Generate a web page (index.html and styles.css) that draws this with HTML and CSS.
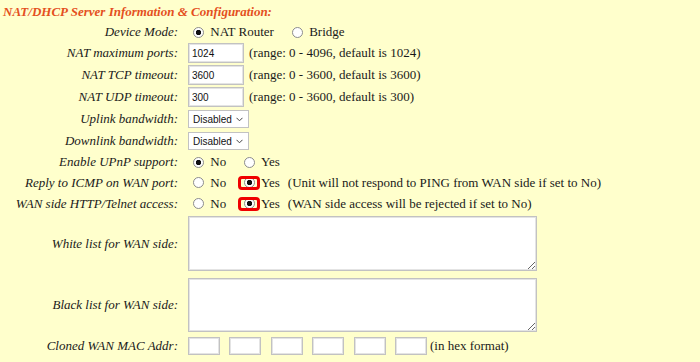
FILE: index.html
```html
<!DOCTYPE html>
<html lang="en">
  <head>
    <meta charset="UTF-8" />
    <meta name="viewport" content="width=device-width, initial-scale=1.0" />
    <title>NAT/DHCP Server Configuration</title>
    <link rel="stylesheet" href="styles.css">
  </head>
  <body>
    <div class="config">
      <div class="heading">NAT/DHCP Server Information &amp; Configuration:</div>

      <!-- Mode -->
      <div class="row row-sm">
        <div class="label">Device Mode:</div>
        <div class="field">
          <label class="opt"><input type="radio" name="mode" checked> NAT Router</label>
          <label class="opt"><input type="radio" name="mode"> Bridge</label>
        </div>
      </div>

      <!-- NAT settings -->
      <div class="row">
        <div class="label">NAT maximum ports:</div>
        <div class="field">
          <input type="text" class="num" value="1024">
          <span class="hint">(range: 0 - 4096, default is 1024)</span>
        </div>
      </div>
      <div class="row">
        <div class="label">NAT TCP timeout:</div>
        <div class="field">
          <input type="text" class="num" value="3600">
          <span class="hint">(range: 0 - 3600, default is 3600)</span>
        </div>
      </div>
      <div class="row">
        <div class="label">NAT UDP timeout:</div>
        <div class="field">
          <input type="text" class="num" value="300">
          <span class="hint">(range: 0 - 3600, default is 300)</span>
        </div>
      </div>

      <!-- Bandwidth -->
      <div class="row">
        <div class="label">Uplink bandwidth:</div>
        <div class="field">
          <span class="select-wrap">
            <select><option>Disabled</option></select>
            <svg class="chevron" width="7" height="5" viewBox="0 0 7 5"><polyline points="0.5,0.8 3.5,3.8 6.5,0.8" fill="none" stroke="#444" stroke-width="1"/></svg>
          </span>
        </div>
      </div>
      <div class="row">
        <div class="label">Downlink bandwidth:</div>
        <div class="field">
          <span class="select-wrap">
            <select><option>Disabled</option></select>
            <svg class="chevron" width="7" height="5" viewBox="0 0 7 5"><polyline points="0.5,0.8 3.5,3.8 6.5,0.8" fill="none" stroke="#444" stroke-width="1"/></svg>
          </span>
        </div>
      </div>

      <!-- Yes / No options -->
      <div class="row row-sm">
        <div class="label">Enable UPnP support:</div>
        <div class="field">
          <label class="opt"><input type="radio" name="upnp" checked> No</label>
          <label class="opt"><input type="radio" name="upnp"> Yes</label>
        </div>
      </div>
      <div class="row row-md">
        <div class="label">Reply to ICMP on WAN port:</div>
        <div class="field">
          <label class="opt"><input type="radio" name="icmp"> No</label>
          <label class="opt"><span class="mark"><input type="radio" name="icmp" checked></span> Yes</label>
          <span class="note">(Unit will not respond to PING from WAN side if set to No)</span>
        </div>
      </div>
      <div class="row row-md">
        <div class="label">WAN side HTTP/Telnet access:</div>
        <div class="field">
          <label class="opt"><input type="radio" name="wan"> No</label>
          <label class="opt"><span class="mark"><input type="radio" name="wan" checked></span> Yes</label>
          <span class="note">(WAN side access will be rejected if set to No)</span>
        </div>
      </div>

      <!-- Lists -->
      <div class="row row-list">
        <div class="label">White list for WAN side:</div>
        <div class="field">
          <textarea></textarea>
        </div>
      </div>
      <div class="row row-list row-list-last">
        <div class="label">Black list for WAN side:</div>
        <div class="field">
          <textarea></textarea>
        </div>
      </div>

      <!-- MAC -->
      <div class="row">
        <div class="label">Cloned WAN MAC Addr:</div>
        <div class="field">
          <div class="mac">
            <input type="text" class="mac-part">
            <input type="text" class="mac-part">
            <input type="text" class="mac-part">
            <input type="text" class="mac-part">
            <input type="text" class="mac-part">
            <input type="text" class="mac-part">
          </div>
          <span class="hex">(in hex format)</span>
        </div>
      </div>
    </div>
  </body>
</html>
```

FILE: styles.css
```css
/* General Reset */
* {
  margin: 0;
  padding: 0;
  box-sizing: border-box;
}

html,
body {
  height: 100%;
  background: #ffffcc;
  overflow: hidden;
}

body {
  font-family: "Liberation Serif", "Times New Roman", serif;
  font-size: 13px;
  color: #1a1a1a;
}

.config {
  padding-left: 3px;
}

/* Section title */
.heading {
  height: 22px;
  padding-top: 4px;
  font-weight: bold;
  font-style: italic;
  color: #e4501e;
}

/* Rows */
.row {
  display: flex;
  align-items: center;
  height: 22px;
}

.row-sm {
  height: 20px;
}

.row-md {
  height: 21px;
}

.row-list {
  height: auto;
  padding: 2px 0 5px;
}

.row-list-last {
  padding-bottom: 3px;
}

.label {
  width: 175px;
  flex-shrink: 0;
  text-align: right;
  font-style: italic;
}

.field {
  display: flex;
  align-items: center;
  margin-left: 10px;
  white-space: nowrap;
}

/* Radios */
.opt {
  display: flex;
  align-items: center;
  white-space: pre;
}

.opt + .opt {
  margin-left: 13px;
}

input[type="radio"] {
  appearance: none;
  width: 11px;
  height: 11px;
  margin: 0 3px 0 5px;
  border: 1px solid #8c8c8c;
  border-radius: 50%;
  background: #fff;
}

input[type="radio"]:checked {
  background: radial-gradient(circle, #111 0 2.4px, #fff 3px);
}

/* Red highlight drawn over the radio */
.mark {
  position: relative;
  display: flex;
}

.mark::after {
  content: "";
  position: absolute;
  left: -1px;
  right: -2px;
  top: -1px;
  bottom: -2px;
  border: 3px solid #f00000;
  border-radius: 4px;
}

.note {
  margin-left: 8px;
}

/* Text inputs */
input[type="text"] {
  font-family: "Liberation Sans", Arial, sans-serif;
  font-size: 10px;
  color: #111;
  background: #fff;
  border: 1px solid #c2c2c2;
  box-shadow: inset 0 0 0 1px #e4e4e4;
  outline: none;
}

.num {
  width: 56px;
  height: 20px;
  padding: 0 3px;
}

.hint {
  margin-left: 5px;
}

/* Selects */
.select-wrap {
  position: relative;
  display: inline-flex;
}

select {
  appearance: none;
  width: 61px;
  height: 18px;
  padding: 0 0 0 4px;
  font-family: "Liberation Sans", Arial, sans-serif;
  font-size: 10px;
  color: #111;
  background: #fff;
  border: 1px solid #c2c2c2;
  border-radius: 0;
}

.chevron {
  position: absolute;
  right: 6px;
  top: 7px;
}

/* Lists */
textarea {
  display: block;
  width: 349px;
  height: 55px;
  background: #fff;
  border: 1px solid #c2c2c2;
  box-shadow: inset 0 0 0 1px #e4e4e4;
  outline: none;
}

.row-list-last textarea {
  height: 54px;
}

/* MAC address */
.mac {
  display: flex;
  gap: 9.4px;
}

.mac-part {
  width: 32px;
  height: 18px;
}

.hex {
  margin-left: 3px;
}
```
